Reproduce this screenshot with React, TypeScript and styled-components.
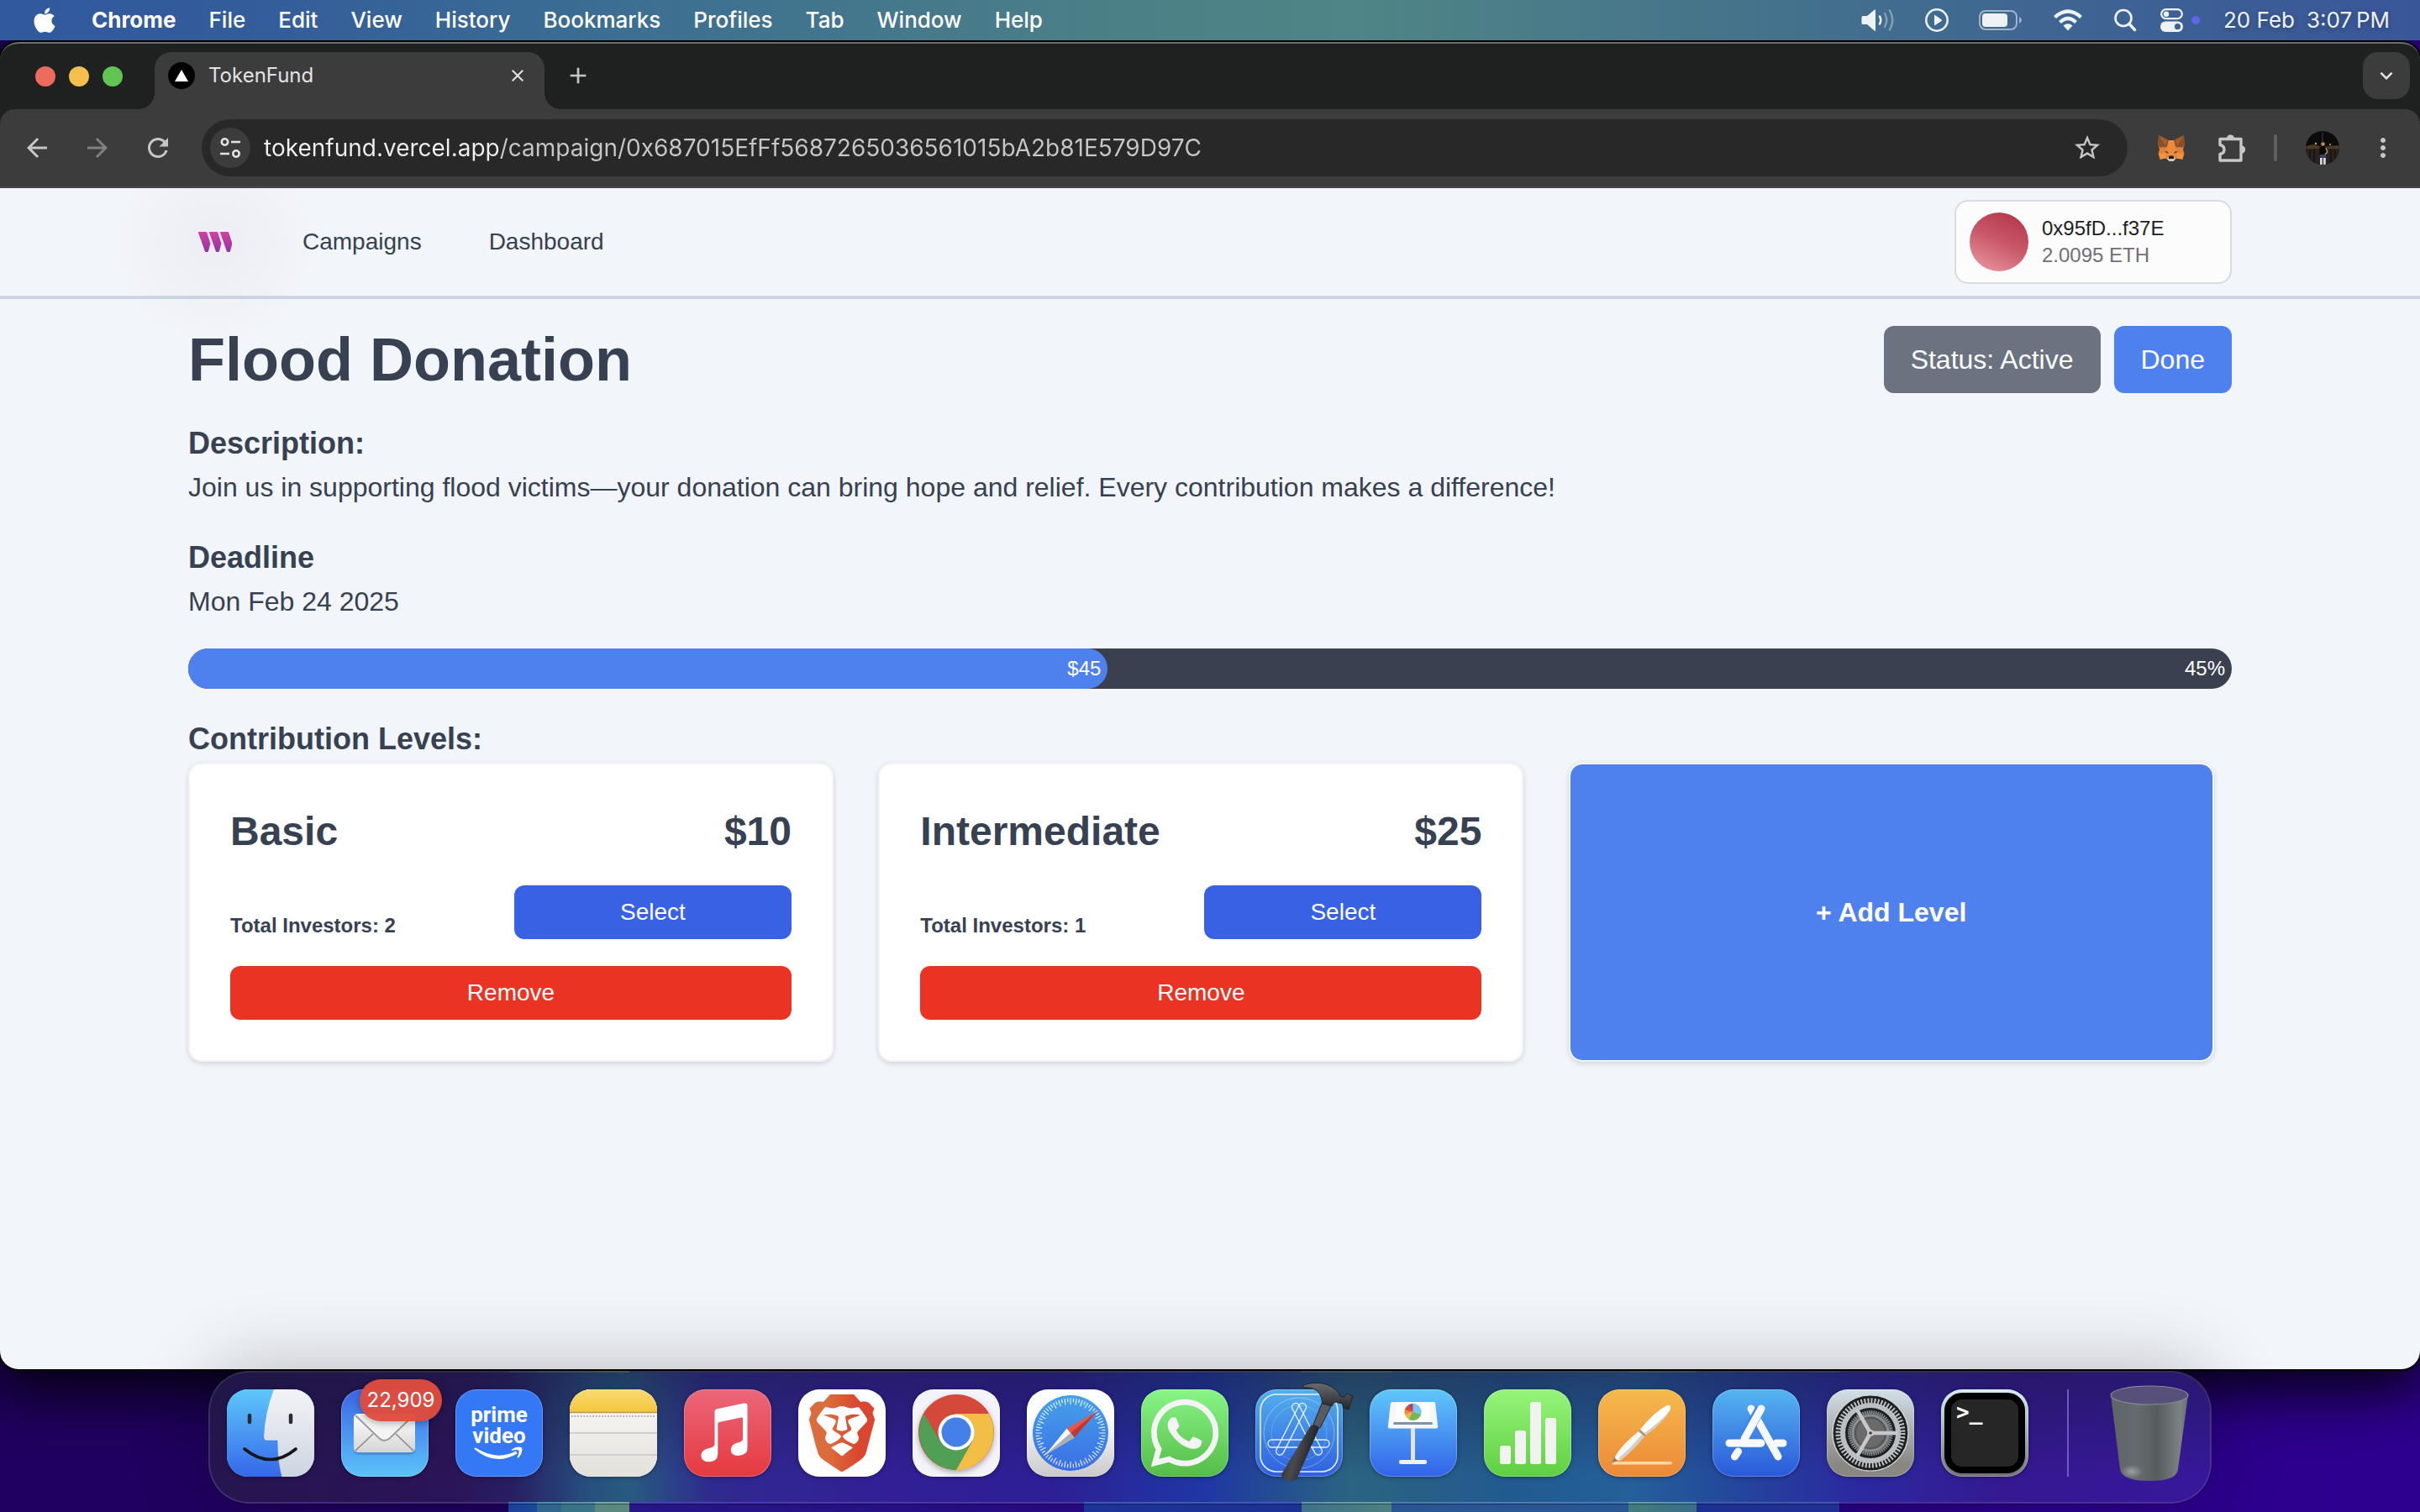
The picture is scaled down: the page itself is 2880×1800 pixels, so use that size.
import React from 'react';
import styled, { createGlobalStyle } from 'styled-components';
import { FaApple, FaWhatsapp } from 'react-icons/fa';
import { SiBrave } from 'react-icons/si';
import {
  MdArrowBack,
  MdArrowForward,
  MdRefresh,
  MdStarOutline,
  MdMoreVert,
  MdClose,
  MdAdd,
  MdKeyboardArrowDown,
} from 'react-icons/md';

const systemFont = `Inter, Roboto, sans-serif`;
const pageFont = `"Liberation Sans", Arial, sans-serif`;

const GlobalStyle = createGlobalStyle`
  *, *::before, *::after { box-sizing: border-box; }
  body { margin: 0; }
  button { border: 0; padding: 0; margin: 0; background: none; color: inherit; font: inherit; cursor: pointer; }
  a { color: inherit; text-decoration: none; }
  h1, h2, h3, p, ul { margin: 0; padding: 0; }
  ul { list-style: none; }
  svg { display: block; flex: none; }
`;

/* ---------- Desktop ---------- */

const Desktop = styled.div`
  min-height: 100vh;
  display: flex;
  flex-direction: column;
  font-family: ${systemFont};
  background:
    linear-gradient(58deg, transparent 93%, rgba(40, 60, 190, 0.35) 93%, rgba(40, 30, 160, 0.3) 95%, transparent 95%),
    linear-gradient(
      90deg,
      #200060 0%, #200060 21%,
      #1f47a8 21%, #1f52ac 22.2%,
      #35729c 22.2%, #35729c 23.2%,
      #3f8098 23.2%, #3f8098 24.6%,
      #63988a 24.6%, #63988a 26%,
      #2a1a96 26%, #2b0a90 44.8%,
      #1f3aa8 44.8%, #1f36a4 53.8%,
      #45809a 53.8%, #558e90 57.5%,
      #2d60a4 57.5%, #2d60a4 67.3%,
      #4a8a8a 67.3%, #3f7a98 70.1%,
      #2036a0 70.1%, #2236a4 76%,
      #2a0088 76%, #2e0090 100%
    );
`;

const MenuBar = styled.header`
  position: relative;
  z-index: 1;
  height: 48px;
  padding: 0 36px;
  display: flex;
  align-items: center;
  justify-content: space-between;
  color: #fff;
  font-size: 26px;
  line-height: 32px;
  font-weight: 500;
  background: linear-gradient(90deg, #31599e 0%, #335c9b 10%, #3b6e92 25%, #4b7f87 45%, #4f8586 56%, #46758a 70%, #3d6294 88%, #39569a 100%);
  text-shadow: 0 2px 6px rgba(0, 0, 0, 0.3);
`;

const MenuGroup = styled.nav`
  display: flex;
  align-items: center;
  gap: 39px;
`;

const MenuItem = styled.button<{ $strong?: boolean }>`
  font-weight: ${(p) => (p.$strong ? 700 : 500)};
`;

const StatusGroup = styled.div`
  display: flex;
  align-items: center;
  gap: 28px;
  color: #eef2f5;
`;

const StatusIcons = styled.div`
  display: flex;
  align-items: center;
  gap: 36px;
`;

const Clock = styled.time`
  display: flex;
  gap: 14px;
  font-weight: 400;
`;

const ControlCenter = styled.button`
  display: flex;
  align-items: center;
  gap: 10px;
`;

const PrivacyDot = styled.span`
  width: 10px;
  height: 10px;
  border-radius: 50%;
  background: #6264ec;
`;

/* ---------- Browser window ---------- */

const BrowserWindow = styled.main`
  flex: 1;
  margin-top: 2px;
  display: flex;
  flex-direction: column;
  border-radius: 22px;
  overflow: hidden;
  border-top: 2px solid #6c6e6d;
  background: #1f2120;
  box-shadow: 0 0 0 2px #000, 0 16px 70px 10px rgba(0, 0, 0, 0.9);
`;

const TabStrip = styled.div`
  height: 78px;
  padding: 10px 12px 0 42px;
  display: flex;
  align-items: stretch;
`;

const Lights = styled.div`
  display: flex;
  align-items: center;
  gap: 16px;
  margin-right: 38px;
  padding-bottom: 10px;
`;

const Light = styled.button<{ $color: string }>`
  width: 24px;
  height: 24px;
  border-radius: 50%;
  background: ${(p) => p.$color};
`;

const Tab = styled.div`
  position: relative;
  width: 464px;
  padding: 0 20px 12px 16px;
  display: flex;
  align-items: center;
  gap: 16px;
  border-radius: 20px 20px 0 0;
  background: #3c3c3c;
  color: #e3e3e3;
  font-size: 24px;
  line-height: 32px;

  &::before,
  &::after {
    content: '';
    position: absolute;
    bottom: 0;
    width: 20px;
    height: 20px;
  }
  &::before {
    right: 100%;
    background: radial-gradient(circle at 0 0, transparent 20px, #3c3c3c 20px);
  }
  &::after {
    left: 100%;
    background: radial-gradient(circle at 100% 0, transparent 20px, #3c3c3c 20px);
  }
`;

const Favicon = styled.span`
  width: 32px;
  height: 32px;
  border-radius: 50%;
  background: #000;
  display: grid;
  place-items: center;
`;

const TabTitle = styled.span`
  flex: 1;
`;

const IconButton = styled.button<{ $dim?: boolean }>`
  display: grid;
  place-items: center;
  color: ${(p) => (p.$dim ? '#808080' : '#c7c7c7')};
`;

const NewTab = styled(IconButton)`
  margin-left: 24px;
  padding-bottom: 12px;
`;

const TabSearch = styled(IconButton)`
  width: 56px;
  height: 56px;
  margin-left: auto;
  border-radius: 18px;
  background: #3c3c3c;
  color: #e3e3e3;
`;

const Toolbar = styled.div`
  display: flex;
  align-items: center;
  gap: 34px;
  padding: 12px 26px;
  border-bottom: 2px solid #474747;
  border-radius: 18px 18px 0 0;
  background: #3c3c3c;
`;

const NavButtons = styled.div`
  display: flex;
  gap: 36px;
`;

const AddressBar = styled.div`
  flex: 1;
  height: 68px;
  padding: 0 30px 0 10px;
  display: flex;
  align-items: center;
  gap: 16px;
  border-radius: 34px;
  background: #282828;
`;

const SiteInfo = styled.button`
  width: 48px;
  height: 48px;
  border-radius: 50%;
  display: grid;
  place-items: center;
  background: #3c3c3c;
`;

const AddressInput = styled.input`
  flex: 1;
  min-width: 0;
  padding: 0;
  border: 0;
  outline: 0;
  font-family: ${systemFont};
  font-size: 28px;
  line-height: 36px;
  color: transparent;
  background: linear-gradient(90deg, #f0f0f0 282px, #c7c7c7 282px);
  -webkit-background-clip: text;
  background-clip: text;
`;

const ToolbarDivider = styled.span`
  width: 4px;
  height: 32px;
  border-radius: 2px;
  background: #5f5f5f;
`;

const Avatar = styled.span`
  display: block;
  width: 40px;
  height: 40px;
  border-radius: 50%;
  overflow: hidden;
`;

/* ---------- Web page ---------- */

const Page = styled.div`
  flex: 1;
  background: #f2f5fa;
  color: #374151;
  font-family: ${pageFont};
`;

const SiteNav = styled.nav`
  position: relative;
  border-bottom: 4px solid #cdd6e2;

  &::after {
    content: '';
    position: absolute;
    left: 136px;
    top: -54px;
    width: 240px;
    height: 240px;
    border-radius: 50%;
    clip-path: inset(54px 0 0 0);
    background: radial-gradient(closest-side, rgba(190, 160, 180, 0.09), rgba(200, 175, 190, 0.03) 75%, transparent);
    pointer-events: none;
  }
`;

const Container = styled.div`
  width: 100%;
  max-width: 2560px;
  margin: 0 auto;
  padding: 0 64px;
`;

const NavInner = styled(Container)`
  height: 128px;
  display: flex;
  align-items: center;
`;

const LogoLink = styled.a`
  padding: 0 12px;
`;

const NavLinks = styled.div`
  display: flex;
  gap: 80px;
  margin-left: 72px;
  font-size: 28px;
  line-height: 40px;
`;

const Wallet = styled.button`
  width: 330px;
  height: 100px;
  margin-left: auto;
  padding: 0 16px;
  display: flex;
  align-items: center;
  gap: 16px;
  border: 2px solid #dadae1;
  border-radius: 16px;
  background: #fcfcfd;
  text-align: left;
  font-size: 24px;
  line-height: 32px;
`;

const WalletOrb = styled.span`
  width: 70px;
  height: 70px;
  border-radius: 50%;
  background: linear-gradient(205deg, #b5384c 10%, #c95a69 50%, #ec9ca6 100%);
`;

const WalletText = styled.span`
  display: flex;
  flex-direction: column;
`;

const Address = styled.span`
  color: #211f26;
`;

const Balance = styled.span`
  color: #706f78;
`;

const Content = styled(Container)`
  padding-top: 32px;
  padding-bottom: 32px;
  display: flex;
  flex-direction: column;
  gap: 32px;
`;

const TitleRow = styled.div`
  display: flex;
  align-items: center;
  justify-content: space-between;
`;

const Title = styled.h1`
  font-size: 72px;
  line-height: 80px;
  font-weight: 700;
`;

const Actions = styled.div`
  display: flex;
  gap: 16px;
`;

const ActionButton = styled.button<{ $color: string }>`
  padding: 16px 32px;
  border-radius: 12px;
  background: ${(p) => p.$color};
  color: #fff;
  font-size: 32px;
  line-height: 48px;
`;

const SectionHeading = styled.h2`
  font-size: 36px;
  line-height: 56px;
  font-weight: 700;
`;

const BodyText = styled.p`
  font-size: 32px;
  line-height: 48px;
`;

const ProgressTrack = styled.div`
  display: flex;
  align-items: center;
  justify-content: space-between;
  height: 48px;
  border-radius: 24px;
  background: #3b4050;
  color: #fff;
  font-size: 24px;
  line-height: 32px;
`;

const ProgressFill = styled.div`
  height: 48px;
  padding: 8px;
  border-radius: 24px;
  background: #4f81ee;
  text-align: right;
`;

const ProgressLabel = styled.span`
  padding: 0 8px;
`;

const Tiers = styled.div`
  display: grid;
  grid-template-columns: repeat(3, 1fr);
  gap: 32px;
`;

const TierCard = styled.article`
  width: 100%;
  max-width: 768px;
  padding: 48px;
  display: flex;
  flex-direction: column;
  gap: 32px;
  border: 2px solid #f1f4f8;
  border-radius: 16px;
  background: #fff;
  background-clip: padding-box;
  box-shadow: 0 2px 6px rgba(0, 0, 0, 0.14);
`;

const TierHead = styled.div`
  display: flex;
  justify-content: space-between;
  font-size: 48px;
  line-height: 64px;
  font-weight: 700;
`;

const TierName = styled.h3`
  font-size: 48px;
`;

const TierRow = styled.div`
  display: grid;
  grid-template-columns: 1fr 1fr;
  gap: 8px;
  align-items: end;
`;

const Investors = styled.p`
  font-size: 24px;
  line-height: 32px;
  font-weight: 700;
`;

const TierButton = styled.button<{ $color: string }>`
  height: 64px;
  border-radius: 12px;
  background: ${(p) => p.$color};
  color: #fff;
  font-size: 28px;
  line-height: 40px;
`;

const AddLevel = styled.button`
  width: 100%;
  max-width: 768px;
  border: 2px solid #f1f4f8;
  border-radius: 16px;
  background: #4f81ee;
  background-clip: padding-box;
  box-shadow: 0 2px 6px rgba(0, 0, 0, 0.14);
  color: #fff;
  font-size: 32px;
  line-height: 48px;
  font-weight: 700;
`;

/* ---------- Dock ---------- */

const DockArea = styled.footer`
  position: relative;
  padding: 2px 0 10px;
  display: flex;
  justify-content: center;
`;

const DockBar = styled.div`
  display: flex;
  align-items: flex-start;
  padding: 20px 20px 30px;
  border: 2px solid rgba(255, 255, 255, 0.17);
  border-radius: 48px;
  background:
    linear-gradient(180deg, rgba(24, 24, 60, 0.45), rgba(30, 20, 80, 0) 80%),
    linear-gradient(90deg, #251550 0%, #2b1458 12%, #281d62 15%, #27507f 19%, #285a80 21%, #2f2a90 25%, #321f96 34%, #2d1f96 42%, #1f38a4 50%, #2a6480 57%, #225a90 65%, #25609a 71%, #23489c 76%, #2b2aa0 82%, #351892 90%, #36189a 100%);
  background-clip: padding-box;
  box-shadow: 0 -4px 90px rgba(0, 0, 0, 0.24), 0 0 0 1px rgba(0, 0, 0, 0.4);
`;

const AppList = styled.ul`
  display: flex;
  gap: 32px;
`;

const AppItem = styled.li`
  position: relative;
`;

const AppTile = styled.button<{ $bg: string; $clip?: boolean }>`
  width: 104px;
  height: 104px;
  display: block;
  border-radius: 25px;
  overflow: ${(p) => (p.$clip === false ? 'visible' : 'hidden')};
  background: ${(p) => p.$bg};
  box-shadow: 0 1px 5px rgba(0, 0, 0, 0.35), inset 0 0 0 1px rgba(255, 255, 255, 0.25);
  color: #fff;
`;

const Badge = styled.span`
  position: absolute;
  top: -12px;
  left: 22px;
  min-width: 98px;
  height: 50px;
  border-radius: 25px;
  display: grid;
  place-items: center;
  background: rgba(222, 76, 62, 0.97);
  color: #fff;
  font-size: 24px;
  line-height: 32px;
  box-shadow: 0 2px 8px rgba(0, 0, 0, 0.3);
`;

const Centered = styled.span`
  height: 100%;
  display: grid;
  place-items: center;
`;

const PrimeLabel = styled.span`
  height: 100%;
  padding-top: 18px;
  display: flex;
  flex-direction: column;
  align-items: center;
  font-family: Roboto, sans-serif;
  font-size: 26px;
  line-height: 25px;
  font-weight: 700;
`;

const TerminalFrame = styled.span`
  height: 100%;
  padding: 4px;
  display: flex;
`;

const TerminalScreen = styled.span`
  flex: 1;
  padding: 3px 6px;
  border: 8px solid #000;
  border-radius: 21px;
  background: #262626;
  text-align: left;
  font-family: 'DejaVu Sans Mono', monospace;
  font-size: 26px;
  line-height: 24px;
  font-weight: 700;
`;

const DockDivider = styled.span`
  align-self: stretch;
  width: 2px;
  margin: 0 44px 0 46px;
  background: rgba(150, 120, 230, 0.65);
`;

const TrashButton = styled.button`
  width: 104px;
  height: 104px;
`;

/* ---------- Drawings ---------- */

const VolumeIcon = () => (
  <svg width="40" height="32" viewBox="0 0 40 32" fill="none" strokeLinecap="round">
    <path d="M2 11h5l9-7.500q1-.8 1 .6v24q0 1.400-1 .6L7 21H2q-1.500 0-1.500-1.500v-7Q.5 11 2 11z" fill="#eef2f5" />
    <path d="M22 11.500q2.600 4.500 0 9" stroke="#eef2f5" strokeWidth="2.500" />
    <path d="M28 8q4.500 8 0 16M34 4.500q6.500 11.500 0 23" stroke="rgba(255,255,255,.35)" strokeWidth="2.500" />
  </svg>
);

const PlayIcon = () => (
  <svg width="28" height="28" viewBox="0 0 28 28">
    <circle cx="14" cy="14" r="12.700" fill="none" stroke="#eef2f5" strokeWidth="2.500" />
    <path d="M11 8.500v11q0 1 1 .5l7.500-5q.8-.8 0-1.700L12 8q-1-.5-1 .5z" fill="#eef2f5" />
  </svg>
);

const BatteryIcon = () => (
  <svg width="52" height="24" viewBox="0 0 52 24">
    <rect x="1" y="1" width="44" height="22" rx="7" fill="none" stroke="rgba(255,255,255,.5)" strokeWidth="2" />
    <rect x="4" y="4" width="30" height="16" rx="4" fill="#eef2f5" />
    <path d="M48 8q3 1.500 3 4t-3 4z" fill="rgba(255,255,255,.5)" />
  </svg>
);

const WifiIcon = () => (
  <svg width="36" height="26" viewBox="0 0 36 26" fill="none" stroke="#eef2f5" strokeWidth="4.200">
    <path d="M2.500 9.500Q18-4.500 33.500 9.500" />
    <path d="M8.500 15.500Q18 6.500 27.500 15.500" />
    <path d="M12.500 19.500Q18 15 23.500 19.500L18 25.500z" fill="#eef2f5" stroke="none" />
  </svg>
);

const SearchIcon = () => (
  <svg width="28" height="28" viewBox="0 0 28 28" fill="none" stroke="#eef2f5" strokeLinecap="round">
    <circle cx="12" cy="11.500" r="9.500" strokeWidth="2.600" />
    <path d="M19 18.500l6.500 7" strokeWidth="3.400" />
  </svg>
);

const SwitchesIcon = () => (
  <svg width="27" height="28" viewBox="0 0 27 28">
    <rect x="1.200" y="1.200" width="24.600" height="11" rx="5.500" fill="none" stroke="#eef2f5" strokeWidth="2.200" />
    <circle cx="7" cy="6.700" r="3.200" fill="#eef2f5" />
    <rect x="0" y="15.500" width="27" height="12.500" rx="6.200" fill="#eef2f5" />
    <circle cx="20.500" cy="21.700" r="3.600" fill="#3d6294" />
  </svg>
);

const SiteInfoIcon = () => (
  <svg width="26" height="26" viewBox="0 0 26 26" fill="none" stroke="#e3e3e3" strokeWidth="2.600">
    <circle cx="6.500" cy="6" r="3.700" />
    <path d="M14 6h11M1 20h11" />
    <circle cx="20" cy="20" r="3.700" />
  </svg>
);

const FoxIcon = () => (
  <svg width="36" height="36" viewBox="0 0 36 36">
    <path d="M3 3l12 6h6l12-6 .5 12-1.500 5 1.500 5-2 7-7-2-3 3h-7l-3-3-7 2-2-7 1.500-5L2.500 15z" fill="#e2823a" />
    <path d="M3 3l12 6-2 8-9 .5L2.500 14zM33 3L21 9l2 8 9 .5 1.500-3.500z" fill="#8a4f28" />
    <path d="M4 4l9.500 5.500L11 16zM32 4l-9.500 5.500L25 16z" fill="#a85d2c" />
    <path d="M15 9h6l2 8 1 8-3 3h-6l-3-3 1-8z" fill="#ea8c3c" />
    <path d="M4 25l7-1 1.500 6.500-7.500 1zM32 25l-7-1-1.500 6.500 7.500 1z" fill="#f09442" />
    <path d="M10 22l4 .5.500 2.500zM26 22l-4 .5-.5 2.500z" fill="#3b3a44" />
    <path d="M13 31l2.500-3h5l2.500 3-2.500 3h-5z" fill="#d9c7b4" />
    <path d="M15.500 27.500h5l.8 3.500h-6.600z" fill="#1d1a1c" />
  </svg>
);

const PuzzleIcon = () => (
  <svg width="36" height="36" viewBox="0 0 36 36" fill="none" stroke="#c7c7c7" strokeWidth="3.400" strokeLinejoin="round">
    <path d="M6 7.500h25V33H6v-7.500q5-1 5-5.500t-5-5.500z" />
    <path d="M14.500 7.500a4 4.500 0 0 1 8 0zM31 16a4.500 4 0 0 1 0 8z" fill="#c7c7c7" stroke="#c7c7c7" strokeWidth="1.500" />
  </svg>
);

const AvatarPhoto = () => (
  <svg width="40" height="40" viewBox="0 0 40 40">
    <rect width="40" height="40" fill="#0c0b0b" />
    <path d="M0 18l9-2 8 2h7l16-1v5H0z" fill="#4c3a20" />
    <path d="M0 21h40v19H0z" fill="#2a2220" />
    <path d="M5 22v16M10 22v16M30 22v16M35 22v16" stroke="#17110f" strokeWidth="1.500" />
    <path d="M20 2v12" stroke="#3a352e" strokeWidth="1.200" />
    <circle cx="12" cy="15" r="1.200" fill="#d8a84a" />
    <circle cx="29" cy="16" r="1.200" fill="#7a9a3a" />
    <circle cx="20.500" cy="15.500" r="2.300" fill="#b98565" />
    <path d="M16.500 19q4-2 8 0v9h-8z" fill="#08080a" />
    <path d="M24 20l1.800 5-3 3" stroke="#b98565" strokeWidth="1.500" fill="none" />
    <path d="M17 28h7v5h-7z" fill="#34435c" />
    <path d="M17 32h2.800v8H17zM21 32h2.800v8H21z" fill="#cfd8e6" />
  </svg>
);

const SiteLogo = () => (
  <svg width="40" height="24" viewBox="0 0 40 24">
    <defs>
      <linearGradient id="logo" x1="0" y1="0" x2="0" y2="1">
        <stop offset="0" stopColor="#d63a9b" />
        <stop offset="1" stopColor="#8a2ba8" />
      </linearGradient>
    </defs>
    {[0, 13, 26].map((x) => (
      <path
        key={x}
        transform={`translate(${x} 0)`}
        d="M0 1q0-1 1-1h8q1 0 1.200.8L14 12.500q.6 1.500 0 3L12 23q-.3 1-1.200 1H9q-.9 0-1.200-1z"
        fill="url(#logo)"
      />
    ))}
  </svg>
);

const FinderArt = () => (
  <svg width="104" height="104" viewBox="0 0 104 104" fill="none">
    <defs>
      <linearGradient id="fl" x1="0" y1="0" x2="0" y2="1">
        <stop offset="0" stopColor="#5ec8fa" />
        <stop offset="1" stopColor="#3567ea" />
      </linearGradient>
      <linearGradient id="fr" x1="0" y1="0" x2="0" y2="1">
        <stop offset="0" stopColor="#f3f3f6" />
        <stop offset="1" stopColor="#ccd5e2" />
      </linearGradient>
    </defs>
    <rect width="104" height="104" fill="url(#fl)" />
    <path d="M56 0Q45 28 44 58q0 3 3 3h13q0 24 5 43h39V0z" fill="url(#fr)" />
    <path d="M44 58q0 3 3 3h13q0 24 5 43" stroke="#2f5fae" strokeOpacity=".45" />
    <path d="M27 31v8M76 31v8" stroke="#2b2b2d" strokeWidth="4.500" strokeLinecap="round" />
    <path d="M21 71q31 25 61 0" stroke="#17171a" strokeWidth="3.600" strokeLinecap="round" />
  </svg>
);

const MailArt = () => (
  <svg width="104" height="104" viewBox="0 0 104 104" fill="none">
    <defs>
      <linearGradient id="env" x1="0" y1="0" x2="0" y2="1">
        <stop offset="0" stopColor="#fff" />
        <stop offset="1" stopColor="#d5d5d5" />
      </linearGradient>
    </defs>
    <rect x="15" y="32" width="73" height="46" rx="6" fill="#1d58a8" opacity=".3" />
    <rect x="15" y="29" width="73" height="46" rx="5" fill="url(#env)" />
    <path d="M17 73l21-20M86 73L65 53" stroke="#8b8b8b" strokeWidth="1.600" />
    <path d="M17 31l28 27q6 6 13 0l28-27" fill="#f4f4f4" stroke="#9a9a9a" strokeWidth="1.800" />
  </svg>
);

const Swoosh = () => (
  <svg width="60" height="18" viewBox="0 0 60 18">
    <path d="M2 1.500q25 16 48 4l1.500 3Q25 24 .5 3q0-2 1.500-1.500z" fill="#fff" />
    <path d="M45 3.500q7-4.500 12-2 1.500 6-4 12l-1.500-.5q2.500-5 2-8.500-4-1-8.500.5z" fill="#fff" />
  </svg>
);

const NotesArt = () => (
  <svg width="104" height="104" viewBox="0 0 104 104">
    <defs>
      <linearGradient id="nt" x1="0" y1="0" x2="0" y2="1">
        <stop offset="0" stopColor="#f9dc75" />
        <stop offset="1" stopColor="#f5c53b" />
      </linearGradient>
      <linearGradient id="np" x1="0" y1="0" x2="0" y2="1">
        <stop offset="0" stopColor="#fbfaf8" />
        <stop offset="1" stopColor="#e3e1db" />
      </linearGradient>
    </defs>
    <rect width="104" height="104" fill="url(#np)" />
    <rect width="104" height="27" fill="url(#nt)" />
    <path d="M0 27.500h104" stroke="#b29a52" strokeWidth="1.600" />
    <path d="M2 32h100" stroke="#b5b3b0" strokeWidth="1.800" strokeDasharray="1.800 1.800" />
    <path d="M0 52h104M0 78h104" stroke="#d0cfd0" strokeWidth="2" />
  </svg>
);

const MusicArt = () => (
  <svg width="104" height="104" viewBox="0 0 104 104" fill="#fff">
    <path d="M36.500 27q0-3 3-3.700l32-6.800q4-.7 4 3V70q0 8-10.500 9-9 .3-9.300-7 .2-6.500 8-8.500 6.300-1.300 6.300-4.500V35q0-2-2-1.600l-26 5.600q-1.700.4-1.700 2V77q0 8.500-10.500 9.300-9 .2-9.500-7.300.2-6.500 8.500-8.700 7.700-1.500 7.700-5z" />
  </svg>
);

const GradientDefs = styled.svg`
  position: absolute;
`;

const BraveArt = () => (
  <Centered>
    <GradientDefs width="0" height="0">
      <defs>
        <linearGradient id="brave" x1="0" y1="0" x2="1" y2="0">
          <stop offset="0.300" stopColor="#db6c3c" />
          <stop offset="0.750" stopColor="#da4630" />
        </linearGradient>
      </defs>
    </GradientDefs>
    <SiBrave size={92} fill="url(#brave)" />
  </Centered>
);

const ChromeArt = () => (
  <svg width="104" height="104" viewBox="0 0 104 104">
    <defs>
      <filter id="chs" x="-20%" y="-20%" width="140%" height="150%">
        <feDropShadow dx="0" dy="3" stdDeviation="3" floodOpacity=".3" />
      </filter>
    </defs>
    <g filter="url(#chs)">
      <circle cx="52" cy="51" r="45" fill="#d5493a" />
      <path d="M13.500 29L33 62h38L52 96A45 45 0 0 1 13.500 29z" fill="#519e54" />
      <path d="M52 29h39A45 45 0 0 1 52 96l19-34z" fill="#f2be45" />
    </g>
    <circle cx="52" cy="51" r="21.500" fill="#fff" />
    <circle cx="52" cy="51" r="17.500" fill="#4480e8" />
  </svg>
);

const SafariArt = () => (
  <svg width="104" height="104" viewBox="0 0 104 104">
    <defs>
      <linearGradient id="sf" x1="0" y1="0" x2="0" y2="1">
        <stop offset="0" stopColor="#44a2e9" />
        <stop offset="1" stopColor="#3b6de6" />
      </linearGradient>
    </defs>
    <circle cx="52" cy="52" r="45" fill="url(#sf)" />
    {Array.from({ length: 72 }, (_, i) => (
      <path
        key={i}
        d={i % 2 ? 'M52 10.500v4.500' : 'M52 10.500v7.500'}
        stroke="#fff"
        strokeOpacity=".85"
        strokeWidth="1.200"
        transform={`rotate(${i * 5} 52 52)`}
      />
    ))}
    <path d="M84 26L56.500 57.500l-9-11z" fill="#e8564a" />
    <path d="M84 26L56.500 57.500 52 52z" fill="#b93a36" />
    <path d="M22 78l34.500-20.500-9-11z" fill="#f5f5f5" />
    <path d="M22 78l34.500-20.500L52 52z" fill="#a9adb5" />
  </svg>
);

const XcodeArt = () => (
  <svg width="104" height="104" viewBox="0 0 104 104" fill="none" overflow="visible">
    <defs>
      <linearGradient id="hh" x1="0" y1="0" x2="1" y2="0.400">
        <stop offset="0" stopColor="#1b1b1d" />
        <stop offset="0.500" stopColor="#4a4b50" />
        <stop offset="1" stopColor="#161618" />
      </linearGradient>
      <linearGradient id="hm" x1="0" y1="0" x2="0" y2="1">
        <stop offset="0" stopColor="#6b6c72" />
        <stop offset="1" stopColor="#242529" />
      </linearGradient>
    </defs>
    <rect x="6" y="6" width="92" height="92" rx="19" stroke="#e7f2fd" strokeWidth="1.600" />
    <circle cx="52" cy="52" r="42" stroke="#fff" strokeOpacity=".35" />
    <circle cx="52" cy="52" r="33" stroke="#fff" strokeOpacity=".2" />
    <g stroke="#e3f0fd" strokeWidth="1.400">
      <rect x="15" y="60" width="73" height="9" rx="4.500" />
      <rect x="-4.500" y="0" width="9" height="68" rx="4.500" transform="translate(58 17) rotate(27)" />
      <rect x="-4.500" y="0" width="9" height="68" rx="4.500" transform="translate(46 17) rotate(-27)" />
    </g>
    <path d="M69 42L82 9l12 3-17 34z" fill="#595b61" stroke="#222327" />
    <path d="M66 43q5-2 10 3L50 105q-2 5-10 4-9-2-9-8z" fill="url(#hh)" />
    <path d="M57-5q14-5 27-1 14 5 17 14l5 1 3-4 7 3-5 16-6-2-1-5-5-1q-5-3-8 4L80 17q-1-9-5-14-7-6-18-5z" fill="url(#hm)" stroke="#222327" />
  </svg>
);

const KeynoteArt = () => (
  <svg width="104" height="104" viewBox="0 0 104 104">
    <rect x="49" y="44" width="5" height="42" fill="#e3e3e6" />
    <rect x="35" y="84" width="33" height="5" rx="2" fill="#f0f0f2" />
    <path d="M27 15h49q2 0 2.200 2l3 27q.2 2.500-2.200 2.500H24q-2.500 0-2.200-2.500l3-27q.2-2 2.200-2z" fill="#f6f7fa" />
    <path d="M32 17h39l1 21H31z" fill="#fff" />
    <rect x="28" y="39" width="47" height="3" rx="1.500" fill="#7e93a8" />
    <circle cx="51.500" cy="27" r="10" fill="#f2b74b" />
    <path d="M51.500 27V17a10 10 0 0 1 9.500 13z" fill="#74c8f6" />
    <path d="M51.500 27l9.500 3a10 10 0 0 1-14.500 5.500z" fill="#6fba56" />
    <path d="M51.500 27V17a10 10 0 0 0-6 2z" fill="#a0447f" />
    <path d="M51.500 27l-6-8a10 10 0 0 0-3.700 5.500z" fill="#d8443c" />
    <path d="M51.500 27l-9.700-2.500a10 10 0 0 0 0 5z" fill="#ec8a3d" />
  </svg>
);

const NumbersArt = () => (
  <svg width="104" height="104" viewBox="0 0 104 104" fill="#f1f3f1">
    <rect x="19" y="67" width="13" height="22" rx="2.500" />
    <rect x="37" y="49" width="13" height="40" rx="2.500" />
    <rect x="55" y="15" width="13" height="74" rx="2.500" />
    <rect x="73" y="34" width="13" height="55" rx="2.500" />
  </svg>
);

const PagesArt = () => (
  <svg width="104" height="104" viewBox="0 0 104 104">
    <rect x="16" y="86" width="72" height="3.500" rx="1.500" fill="#fbd9a6" />
    <path d="M16 88l5-10 5 5z" fill="#8a7a66" />
    <path d="M20 80Q28 66 48 50l7 6Q38 76 27 84q-3 1.500-5.500-.5-2-1.500-1.500-3.500z" fill="#f8f6f4" />
    <path d="M48 50l1.500-1.800 7 6.300L55 56z" fill="#9a9a9c" />
    <path d="M50 47.500Q66 28 80 20q4-2 5.500-.5t-.5 6Q78 38 57 54z" fill="#fff" />
    <path d="M27 84Q38 76 55 56l-3-2.500Q38 71 24 82zM57 54q21-16 28-28.500-10 12-30 26.500z" fill="#d4cdc8" />
  </svg>
);

const AppStoreArt = () => (
  <svg width="104" height="104" viewBox="0 0 104 104" stroke="#f6f9ff" strokeWidth="9" strokeLinecap="round" fill="none">
    <path d="M46 23l32 57" />
    <path d="M20 64h38M76 64h8M30.500 74l-4 6" />
    <path d="M57 23L37 58" stroke="#3f86e6" strokeWidth="12" strokeLinecap="butt" />
    <path d="M58 23L38 59" />
    <path d="M37 64h20" />
  </svg>
);

const SettingsArt = () => (
  <svg width="104" height="104" viewBox="0 0 104 104" fill="none">
    <circle cx="52" cy="52" r="45" fill="#1f2022" stroke="#d5d8da" strokeWidth="1.200" />
    <circle cx="52" cy="52" r="37.500" stroke="#b9bfc2" strokeWidth="8" strokeDasharray="2 1.930" />
    <circle cx="52" cy="52" r="33" stroke="#b9bfc2" strokeWidth="6" />
    <circle cx="52" cy="52" r="25" fill="#55585a" stroke="#8a8e90" strokeWidth="4" strokeDasharray="1.500 1.120" />
    <circle cx="52" cy="52" r="21" stroke="#8a8e90" strokeWidth="3" />
    <circle cx="52" cy="52" r="17" fill="#6c6a68" />
    <g stroke="#c3c9cc" strokeWidth="4.500">
      <path d="M52 52h32M52 52L36 24.300M52 52L36 79.700" />
    </g>
    <circle cx="52" cy="52" r="4" fill="#c3c9cc" />
    <circle cx="52" cy="52" r="1.800" fill="#3a3c3e" />
  </svg>
);

const TrashArt = () => (
  <svg width="104" height="104" viewBox="0 0 104 104" overflow="visible">
    <defs>
      <linearGradient id="tr" x1="0" y1="0" x2="1" y2="0">
        <stop offset="0" stopColor="#5f6469" />
        <stop offset="0.350" stopColor="#666b6f" />
        <stop offset="0.600" stopColor="#565b5e" />
        <stop offset="0.900" stopColor="#7d8285" />
        <stop offset="1" stopColor="#686d70" />
      </linearGradient>
      <radialGradient id="tg">
        <stop offset="0" stopColor="#b4b8ba" stopOpacity="0.700" />
        <stop offset="1" stopColor="#b4b8ba" stopOpacity="0" />
      </radialGradient>
    </defs>
    <path d="M6 7l11 88q2 14 35 14t34-14L98 7z" fill="url(#tr)" />
    <ellipse cx="31" cy="98" rx="13" ry="8" fill="url(#tg)" />
    <ellipse cx="52" cy="7" rx="46" ry="11" fill="#56507a" stroke="#8a8b92" strokeWidth="1.200" />
  </svg>
);

/* ---------- Data ---------- */

const menuItems = ['File', 'Edit', 'View', 'History', 'Bookmarks', 'Profiles', 'Tab', 'Window', 'Help'];

const tiers = [
  { name: 'Basic', amount: 10, investors: 2 },
  { name: 'Intermediate', amount: 25, investors: 1 },
];

const campaign = { raised: 45, target: 100 };

type DockApp = { name: string; bg: string; art: React.ReactNode; badge?: string; clip?: boolean };

const dockApps: DockApp[] = [
  { name: 'Finder', bg: '#5ec8fa', art: <FinderArt /> },
  { name: 'Mail', bg: 'linear-gradient(#3a64e6, #5cc4f9)', art: <MailArt />, badge: '22,909' },
  {
    name: 'Prime Video',
    bg: '#3478f6',
    art: (
      <PrimeLabel>
        <span>prime</span>
        <span>video</span>
        <Swoosh />
      </PrimeLabel>
    ),
  },
  { name: 'Notes', bg: '#f5f4f1', art: <NotesArt /> },
  { name: 'Music', bg: 'linear-gradient(#eb6679, #e6393f)', art: <MusicArt /> },
  { name: 'Brave', bg: '#fff', art: <BraveArt /> },
  { name: 'Google Chrome', bg: '#f4f3f9', art: <ChromeArt /> },
  { name: 'Safari', bg: 'linear-gradient(#fff 30%, #cacaca)', art: <SafariArt /> },
  {
    name: 'WhatsApp',
    bg: 'linear-gradient(#88f587, #55bc47)',
    art: (
      <Centered>
        <FaWhatsapp size={92} color="#f4f4f4" />
      </Centered>
    ),
  },
  { name: 'Xcode', bg: 'linear-gradient(#53b0ee, #2f5fdf)', art: <XcodeArt />, clip: false },
  { name: 'Keynote', bg: 'linear-gradient(#60c8fb, #3262e8)', art: <KeynoteArt /> },
  { name: 'Numbers', bg: 'linear-gradient(#96f57b, #5fcf41)', art: <NumbersArt /> },
  { name: 'Pages', bg: 'linear-gradient(#f5ba4c, #ed8938)', art: <PagesArt /> },
  { name: 'App Store', bg: 'linear-gradient(#55b5f0, #2a58da)', art: <AppStoreArt /> },
  { name: 'System Settings', bg: 'linear-gradient(#d3e0e8, #8a8783 85%)', art: <SettingsArt /> },
  {
    name: 'Terminal',
    bg: 'linear-gradient(#d3edf4, #74727a)',
    art: (
      <TerminalFrame>
        <TerminalScreen>&gt;_</TerminalScreen>
      </TerminalFrame>
    ),
  },
];

/* ---------- App ---------- */

export default function App() {
  const percent = (campaign.raised / campaign.target) * 100;

  return (
    <>
      <GlobalStyle />
      <Desktop>
        <MenuBar>
          <MenuGroup aria-label="Menu bar">
            <MenuItem aria-label="Apple menu">
              <FaApple size={34} />
            </MenuItem>
            <MenuItem $strong>Chrome</MenuItem>
            {menuItems.map((item) => (
              <MenuItem key={item}>{item}</MenuItem>
            ))}
          </MenuGroup>
          <StatusGroup>
            <StatusIcons>
              <VolumeIcon />
              <PlayIcon />
              <BatteryIcon />
              <WifiIcon />
              <SearchIcon />
            </StatusIcons>
            <ControlCenter aria-label="Control Center">
              <SwitchesIcon />
              <PrivacyDot />
            </ControlCenter>
            <Clock>
              <span>20 Feb</span>
              <span>3:07{'\u2009'}PM</span>
            </Clock>
          </StatusGroup>
        </MenuBar>

        <BrowserWindow>
          <TabStrip>
            <Lights>
              <Light $color="#ed6a5e" aria-label="Close window" />
              <Light $color="#f5bf4f" aria-label="Minimize window" />
              <Light $color="#61c554" aria-label="Zoom window" />
            </Lights>
            <Tab>
              <Favicon>
                <svg width="16" height="14" viewBox="0 0 16 14">
                  <path d="M8 0l8 14H0z" fill="#fff" />
                </svg>
              </Favicon>
              <TabTitle>TokenFund</TabTitle>
              <IconButton aria-label="Close tab">
                <MdClose size={24} color="#e3e3e3" />
              </IconButton>
            </Tab>
            <NewTab aria-label="New tab">
              <MdAdd size={32} />
            </NewTab>
            <TabSearch aria-label="Search tabs">
              <MdKeyboardArrowDown size={30} />
            </TabSearch>
          </TabStrip>

          <Toolbar>
            <NavButtons>
              <IconButton aria-label="Back">
                <MdArrowBack size={36} />
              </IconButton>
              <IconButton $dim aria-label="Forward">
                <MdArrowForward size={36} />
              </IconButton>
              <IconButton aria-label="Reload">
                <MdRefresh size={36} />
              </IconButton>
            </NavButtons>
            <AddressBar>
              <SiteInfo aria-label="View site information">
                <SiteInfoIcon />
              </SiteInfo>
              <AddressInput
                aria-label="Address and search bar"
                defaultValue="tokenfund.vercel.app/campaign/0x687015EfFf5687265036561015bA2b81E579D97C"
              />
              <IconButton aria-label="Bookmark this page">
                <MdStarOutline size={36} />
              </IconButton>
            </AddressBar>
            <IconButton aria-label="MetaMask">
              <FoxIcon />
            </IconButton>
            <IconButton aria-label="Extensions">
              <PuzzleIcon />
            </IconButton>
            <ToolbarDivider />
            <IconButton aria-label="Profile">
              <Avatar>
                <AvatarPhoto />
              </Avatar>
            </IconButton>
            <IconButton aria-label="More">
              <MdMoreVert size={36} />
            </IconButton>
          </Toolbar>

          <Page>
            <SiteNav>
              <NavInner>
                <LogoLink href="#home" aria-label="TokenFund home">
                  <SiteLogo />
                </LogoLink>
                <NavLinks>
                  <a href="#campaigns">Campaigns</a>
                  <a href="#dashboard">Dashboard</a>
                </NavLinks>
                <Wallet>
                  <WalletOrb />
                  <WalletText>
                    <Address>0x95fD...f37E</Address>
                    <Balance>2.0095 ETH</Balance>
                  </WalletText>
                </Wallet>
              </NavInner>
            </SiteNav>

            <Content>
              <TitleRow>
                <Title>Flood Donation</Title>
                <Actions>
                  <ActionButton $color="#6b7280">Status: Active</ActionButton>
                  <ActionButton $color="#4f81ee">Done</ActionButton>
                </Actions>
              </TitleRow>

              <section>
                <SectionHeading>Description:</SectionHeading>
                <BodyText>
                  Join us in supporting flood victims—your donation can bring hope and relief. Every contribution makes
                  a difference!
                </BodyText>
              </section>

              <section>
                <SectionHeading>Deadline</SectionHeading>
                <BodyText>Mon Feb 24 2025</BodyText>
              </section>

              <ProgressTrack role="progressbar" aria-label="Raised" aria-valuenow={percent}>
                <ProgressFill style={{ width: `${percent}%` }}>${campaign.raised}</ProgressFill>
                <ProgressLabel>{percent}%</ProgressLabel>
              </ProgressTrack>

              <section>
                <SectionHeading>Contribution Levels:</SectionHeading>
                <Tiers>
                  {tiers.map((tier) => (
                    <TierCard key={tier.name}>
                      <TierHead>
                        <TierName>{tier.name}</TierName>
                        <span>${tier.amount}</span>
                      </TierHead>
                      <TierRow>
                        <Investors>Total Investors: {tier.investors}</Investors>
                        <TierButton $color="#3862e3">Select</TierButton>
                      </TierRow>
                      <TierButton $color="#ea3323">Remove</TierButton>
                    </TierCard>
                  ))}
                  <AddLevel>+ Add Level</AddLevel>
                </Tiers>
              </section>
            </Content>
          </Page>
        </BrowserWindow>

        <DockArea>
          <DockBar>
            <AppList>
              {dockApps.map((app) => (
                <AppItem key={app.name}>
                  <AppTile $bg={app.bg} $clip={app.clip} aria-label={app.name}>
                    {app.art}
                  </AppTile>
                  {app.badge && <Badge>{app.badge}</Badge>}
                </AppItem>
              ))}
            </AppList>
            <DockDivider />
            <TrashButton aria-label="Trash">
              <TrashArt />
            </TrashButton>
          </DockBar>
        </DockArea>
      </Desktop>
    </>
  );
}
